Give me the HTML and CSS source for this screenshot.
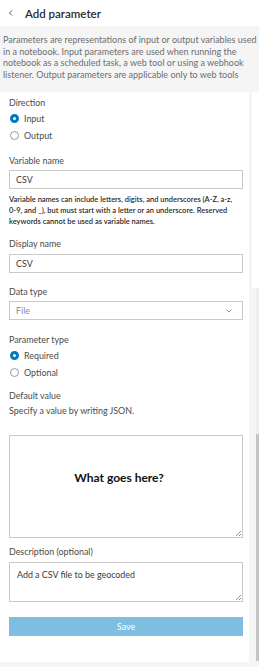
FILE: index.html
```html
<!DOCTYPE html>
<html>
<head>
<meta charset="utf-8">
<link rel="stylesheet" href="styles.css">
</head>
<body>
<div class="page">
  <div class="header">
    <svg class="back" width="8" height="8" viewBox="0 0 8 8"><path d="M5 1.5 L2.5 4 L5 6.5" fill="none" stroke="#555" stroke-width="1"/></svg>
    <span class="title">Add parameter</span>
  </div>
  <div class="intro">Parameters are representations of input or output variables used<br>in a notebook. Input parameters are used when running the notebook as a scheduled task, a web tool or using a webhook listener. Output parameters are applicable only to web tools</div>
  <div class="main">
    <div class="card">
      <div class="field f-dir">
        <div class="label">Direction</div>
        <div class="radios">
          <div class="radio"><span class="dot checked"></span>Input</div>
          <div class="radio"><span class="dot"></span>Output</div>
        </div>
      </div>
      <div class="field f-var">
        <div class="label">Variable name</div>
        <div class="input">CSV</div>
        <div class="help">Variable names can include letters, digits, and underscores (A-Z, a-z,<br>0-9, and _), but must start with a letter or an underscore. Reserved keywords cannot be used as variable names.</div>
      </div>
      <div class="field f-disp">
        <div class="label">Display name</div>
        <div class="input">CSV</div>
      </div>
      <div class="field f-type">
        <div class="label">Data type</div>
        <div class="input select"><span>File</span>
          <svg width="8" height="6" viewBox="0 0 8 6"><path d="M1.5 1.5 L4 4 L6.5 1.5" fill="none" stroke="#888" stroke-width="0.9"/></svg>
        </div>
      </div>
      <div class="field f-ptype">
        <div class="label">Parameter type</div>
        <div class="radios">
          <div class="radio"><span class="dot checked"></span>Required</div>
          <div class="radio"><span class="dot"></span>Optional</div>
        </div>
      </div>
      <div class="field f-def">
        <div class="label">Default value</div>
        <div class="sub">Specify a value by writing JSON.</div>
        <div class="textarea big"><span class="what">What goes here?</span><span class="grip"></span></div>
      </div>
      <div class="field f-desc">
        <div class="label">Description (optional)</div>
        <div class="textarea desc">Add a CSV file to be geocoded<span class="grip"></span></div>
      </div>
      <div class="save">Save</div>
    </div>
    <div class="rail">
      <div class="rail-top"></div>
      <div class="rail-track"></div>
      <div class="rail-thumb"></div>
    </div>
  </div>
</div>
</body>
</html>
```
FILE: styles.css
```css
html, body {
  margin: 0;
  padding: 0;
  background: #ffffff;
}
body {
  font-family: Lato, "Noto Sans", sans-serif;
  color: #4a4a4a;
  width: 259px;
  height: 667px;
  overflow: hidden;
}
.page {
  display: flex;
  flex-direction: column;
  height: 667px;
  background: #f5f5f5;
}
.header {
  height: 26px;
  background: #ffffff;
  display: flex;
  align-items: center;
  padding-left: 7px;
  gap: 10px;
  flex: none;
}
.back { flex: none; }
.title {
  font-size: 11.5px;
  font-weight: 600;
  color: #2b2b2b;
}
.intro {
  height: 66px;
  box-sizing: border-box;
  font-size: 9px;
  line-height: 11.7px;
  color: #6e6e6e;
  padding: 8px 1px 0 3px;
  flex: none;
}
.main {
  display: flex;
  flex: 1;
}
.card {
  width: 249px;
  height: 570px;
  background: #ffffff;
  padding: 5px 7px 0 9px;
  box-sizing: border-box;
  display: flex;
  flex-direction: column;
}
.f-dir { margin-bottom: 13px; }
.f-var { margin-bottom: 11px; }
.f-disp { margin-bottom: 13px; }
.f-type { margin-bottom: 14px; }
.f-ptype { margin-bottom: 11px; }
.f-def { margin-bottom: 8px; }
.label {
  font-size: 8.9px;
  line-height: 12px;
  color: #4a4a4a;
  margin-bottom: 3px;
}
.f-disp .label { margin-bottom: 4px; }
.radios {
  display: flex;
  flex-direction: column;
  gap: 4px;
  padding-left: 1px;
}
.radio {
  display: flex;
  align-items: center;
  gap: 5px;
  font-size: 8.9px;
  line-height: 13px;
  color: #4a4a4a;
}
.dot {
  width: 7px;
  height: 7px;
  border-radius: 50%;
  border: 1px solid #9a9a9a;
  box-sizing: content-box;
  flex: none;
}
.dot.checked {
  width: 3px;
  height: 3px;
  border: 3px solid #0079c1;
  background: #ffffff;
}
.input {
  height: 19px;
  border: 1px solid #c9c9c9;
  box-sizing: border-box;
  font-size: 8.9px;
  line-height: 17px;
  padding-left: 6px;
  color: #3a3a3a;
  width: 234px;
}
.select {
  display: flex;
  justify-content: space-between;
  align-items: center;
  color: #8a8a8a;
  padding-right: 9px;
}
.help {
  font-size: 7.5px;
  line-height: 11px;
  color: #2a2a2a;
  margin-top: 5px;
  font-weight: 600;
  padding-right: 4px;
}
.sub {
  font-size: 8.9px;
  line-height: 12px;
  margin-top: 1px;
  margin-bottom: 18px;
}
.textarea {
  position: relative;
  border: 1px solid #c9c9c9;
  box-sizing: border-box;
  width: 234px;
  font-size: 8.9px;
  color: #3a3a3a;
}
.big {
  height: 103px;
  display: flex;
  align-items: center;
  justify-content: center;
}
.what {
  font-family: Lato, sans-serif;
  font-weight: bold;
  font-size: 12px;
  color: #111111;
  margin-left: -14px;
  margin-top: -19px;
}
.desc {
  height: 40px;
  padding: 6px 7px;
  line-height: 12px;
}
.f-desc .label { margin-bottom: 4px; }
.grip {
  position: absolute;
  right: 1px;
  bottom: 1px;
  width: 5px;
  height: 5px;
  background: linear-gradient(135deg, transparent 45%, #9a9a9a 45%, #9a9a9a 55%, transparent 55%, transparent 75%, #9a9a9a 75%, #9a9a9a 85%, transparent 85%);
}
.save {
  width: 234px;
  height: 19px;
  background: #7fbde1;
  color: #ffffff;
  font-size: 8.9px;
  line-height: 19px;
  text-align: center;
  margin-top: 15px;
}
.rail {
  width: 10px;
  display: flex;
  flex-direction: column;
  align-items: flex-end;
}
.rail-top {
  height: 196px;
  width: 7px;
  background: #ffffff;
}
.rail-track {
  height: 146px;
  width: 3px;
  background: #eeeeee;
}
.rail-thumb {
  height: 227px;
  width: 3px;
  background: #c4c4c4;
}
```
